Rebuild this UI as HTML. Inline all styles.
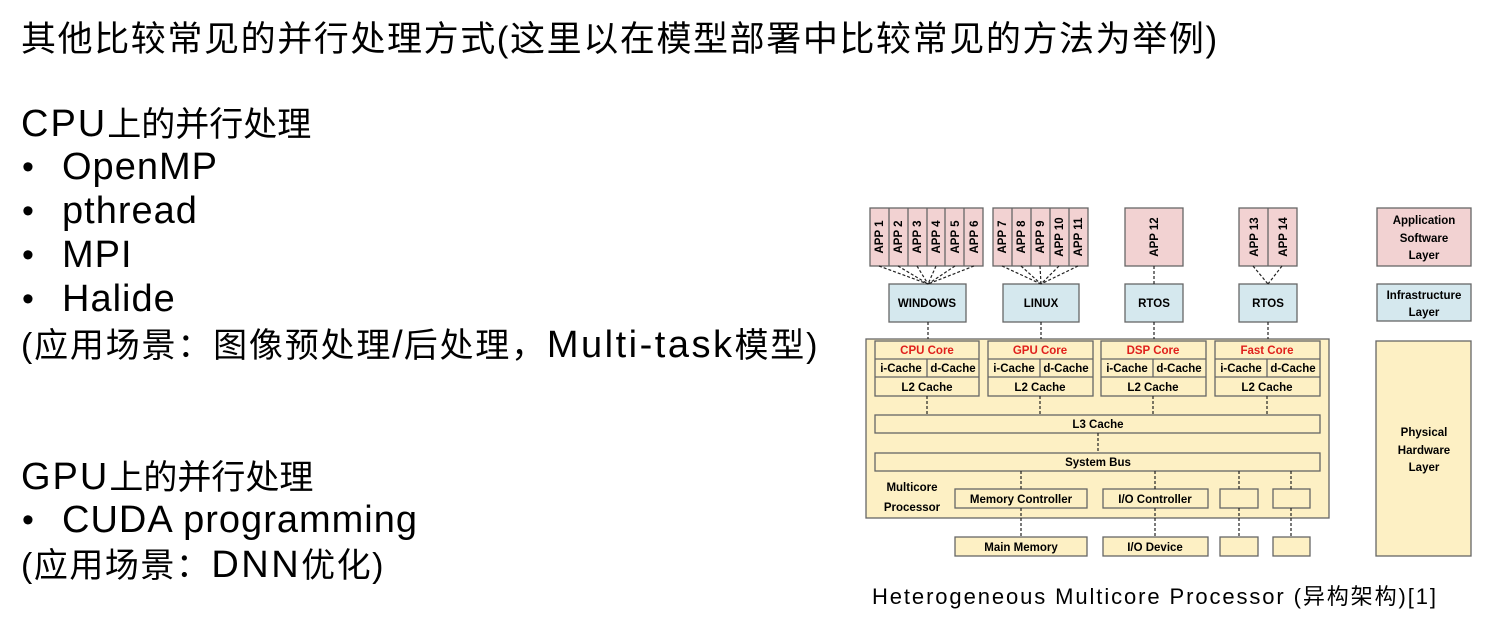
<!DOCTYPE html>
<html><head><meta charset="utf-8"><style>
body{margin:0;width:1498px;height:638px;background:#fff;position:relative;overflow:hidden;font-family:"Liberation Sans","Noto Sans CJK SC",sans-serif;color:#000}
.t{position:absolute;left:21px;font-size:34px;line-height:40px;white-space:nowrap}
.b{position:absolute;left:22px;font-size:34px;line-height:40px}
.b span{position:absolute;left:40px;white-space:nowrap}
.L{font-size:38px;letter-spacing:1px}
svg{position:absolute;left:0;top:0}
svg text{font-family:"Liberation Sans",sans-serif;font-weight:bold;font-size:11.5px;text-anchor:middle}
</style></head><body>
<div class="t" style="top:20px;font-size:35px;letter-spacing:1.6px">其他比较常见的并行处理方式(这里以在模型部署中比较常见的方法为举例)</div>
<div class="t" style="top:104px"><span class="L" style="letter-spacing:2px">CPU</span>上的并行处理</div>
<div class="b" style="top:147px">•<span class="L">OpenMP</span></div>
<div class="b" style="top:191px">•<span class="L">pthread</span></div>
<div class="b" style="top:235px">•<span class="L">MPI</span></div>
<div class="b" style="top:279px">•<span class="L">Halide</span></div>
<div class="t" style="top:325px;letter-spacing:1.8px">(应用场景：图像预处理<span class="L">/</span>后处理，<span class="L" style="letter-spacing:2.5px">Multi-task</span>模型)</div>
<div class="t" style="top:457px"><span class="L" style="letter-spacing:2px">GPU</span>上的并行处理</div>
<div class="b" style="top:500px">•<span class="L">CUDA programming</span></div>
<div class="t" style="top:545px;letter-spacing:1.5px">(应用场景：<span class="L" style="letter-spacing:2.5px">DNN</span>优化)</div>
<div style="position:absolute;left:872px;top:579px;font-size:22px;letter-spacing:1.9px;white-space:nowrap">Heterogeneous Multicore Processor (异构架构)[1]</div>
<svg width="1498" height="638" viewBox="0 0 1498 638">
<g stroke="#666" stroke-width="1.3">
<g fill="#f2d2d2">
<rect x="870" y="208" width="113" height="58"/><rect x="993" y="208" width="95" height="58"/>
<rect x="1125" y="208" width="58" height="58"/><rect x="1239" y="208" width="58" height="58"/>
<rect x="1377" y="208" width="94" height="58"/>
</g>
<path d="M889 208V266M908 208V266M927 208V266M945 208V266M964 208V266M1012 208V266M1031 208V266M1050 208V266M1069 208V266M1268 208V266"/>
<g fill="#d5e8ee">
<rect x="889" y="284" width="77" height="38"/><rect x="1003" y="284" width="76" height="38"/>
<rect x="1125" y="284" width="58" height="38"/><rect x="1239" y="284" width="58" height="38"/>
<rect x="1377" y="284" width="94" height="37"/>
</g>
<g fill="#fdf0c4">
<rect x="866" y="339" width="463" height="179"/>
<rect x="1376" y="341" width="95" height="215"/>
<rect x="875" y="341" width="104" height="55"/><rect x="988" y="341" width="105" height="55"/>
<rect x="1101" y="341" width="105" height="55"/><rect x="1215" y="341" width="105" height="55"/>
<rect x="875" y="415" width="445" height="18"/><rect x="875" y="453" width="445" height="18"/>
<rect x="955" y="489" width="132" height="19"/><rect x="1103" y="489" width="105" height="19"/>
<rect x="1220" y="489" width="38" height="19"/><rect x="1273" y="489" width="37" height="19"/>
<rect x="955" y="537" width="132" height="19"/><rect x="1103" y="537" width="105" height="19"/>
<rect x="1220" y="537" width="38" height="19"/><rect x="1273" y="537" width="37" height="19"/>
</g>
<path d="M875 359H979M875 377H979M927 359V377M988 359H1093M988 377H1093M1040 359V377M1101 359H1206M1101 377H1206M1153 359V377M1215 359H1320M1215 377H1320M1267 359V377" fill="none"/>
</g>
<g stroke="#222" stroke-width="1.2" stroke-dasharray="3,2" fill="none">
<path d="M879 266L928 284M898 266L928 284M917 266L928 284M936 266L928 284M955 266L928 284M974 266L928 284"/>
<path d="M1002 266L1041 284M1021 266L1041 284M1040 266L1041 284M1059 266L1041 284M1078 266L1041 284"/>
<path d="M1154 266V284M1253 266L1268 284M1282 266L1268 284"/>
<path d="M928 322V339M1041 322V339M1154 322V339M1268 322V339"/>
<path d="M927 396V415M1040 396V415M1153 396V415M1267 396V415M1098 433V453"/>
<path d="M1021 471V489M1155 471V489M1239 471V489M1291 471V489M1021 508V537M1155 508V537M1239 508V537M1291 508V537"/>
</g>
<g>
<text transform="translate(883,237) rotate(-90)">APP 1</text><text transform="translate(902,237) rotate(-90)">APP 2</text>
<text transform="translate(921,237) rotate(-90)">APP 3</text><text transform="translate(940,237) rotate(-90)">APP 4</text>
<text transform="translate(959,237) rotate(-90)">APP 5</text><text transform="translate(978,237) rotate(-90)">APP 6</text>
<text transform="translate(1006,237) rotate(-90)">APP 7</text><text transform="translate(1025,237) rotate(-90)">APP 8</text>
<text transform="translate(1044,237) rotate(-90)">APP 9</text><text transform="translate(1063,237) rotate(-90)">APP 10</text>
<text transform="translate(1082,237) rotate(-90)">APP 11</text>
<text transform="translate(1158,237) rotate(-90)">APP 12</text>
<text transform="translate(1258,237) rotate(-90)">APP 13</text><text transform="translate(1287,237) rotate(-90)">APP 14</text>
<text x="1424" y="224" font-size="11">Application</text><text x="1424" y="242" font-size="11">Software</text><text x="1424" y="259" font-size="11">Layer</text>
<text x="927" y="307">WINDOWS</text><text x="1041" y="307">LINUX</text><text x="1154" y="307">RTOS</text><text x="1268" y="307">RTOS</text>
<text x="1424" y="299" font-size="11">Infrastructure</text><text x="1424" y="316" font-size="11">Layer</text>
<g fill="#e0201c"><text x="927" y="354">CPU Core</text><text x="1040" y="354">GPU Core</text><text x="1153" y="354">DSP Core</text><text x="1267" y="354">Fast Core</text></g>
<g font-size="10.5">
<text x="901" y="372">i-Cache</text><text x="953" y="372">d-Cache</text><text x="1014" y="372">i-Cache</text><text x="1066" y="372">d-Cache</text>
<text x="1127" y="372">i-Cache</text><text x="1179" y="372">d-Cache</text><text x="1241" y="372">i-Cache</text><text x="1293" y="372">d-Cache</text>
</g>
<text x="927" y="391">L2 Cache</text><text x="1040" y="391">L2 Cache</text><text x="1153" y="391">L2 Cache</text><text x="1267" y="391">L2 Cache</text>
<text x="1098" y="428">L3 Cache</text><text x="1098" y="466">System Bus</text>
<text x="912" y="491" font-size="13.5">Multicore</text><text x="912" y="511" font-size="13.5">Processor</text>
<text x="1021" y="503">Memory Controller</text><text x="1155" y="503">I/O Controller</text>
<text x="1021" y="551">Main Memory</text><text x="1155" y="551">I/O Device</text>
<text x="1424" y="436">Physical</text><text x="1424" y="454">Hardware</text><text x="1424" y="471">Layer</text>
</g>
</svg>
</body></html>
